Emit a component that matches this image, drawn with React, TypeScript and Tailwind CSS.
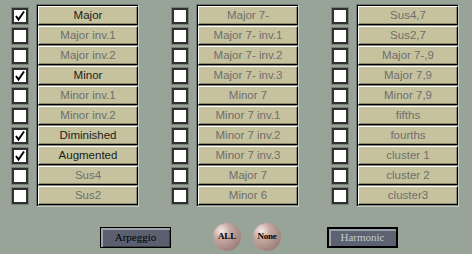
import React from "react";

type Chord = { label: string; on: boolean };

const columns: Chord[][] = [
  [
    { label: "Major", on: true },
    { label: "Major inv.1", on: false },
    { label: "Major inv.2", on: false },
    { label: "Minor", on: true },
    { label: "Minor inv.1", on: false },
    { label: "Minor inv.2", on: false },
    { label: "Diminished", on: true },
    { label: "Augmented", on: true },
    { label: "Sus4", on: false },
    { label: "Sus2", on: false },
  ],
  [
    { label: "Major 7-", on: false },
    { label: "Major 7- inv.1", on: false },
    { label: "Major 7- inv.2", on: false },
    { label: "Major 7- inv.3", on: false },
    { label: "Minor 7", on: false },
    { label: "Minor 7 inv.1", on: false },
    { label: "Minor 7 inv.2", on: false },
    { label: "Minor 7 inv.3", on: false },
    { label: "Major 7", on: false },
    { label: "Minor 6", on: false },
  ],
  [
    { label: "Sus4,7", on: false },
    { label: "Sus2,7", on: false },
    { label: "Major 7-,9", on: false },
    { label: "Major 7,9", on: false },
    { label: "Minor 7,9", on: false },
    { label: "fifths", on: false },
    { label: "fourths", on: false },
    { label: "cluster 1", on: false },
    { label: "cluster 2", on: false },
    { label: "cluster3", on: false },
  ],
];

function CheckBox({ checked }: { checked: boolean }) {
  return (
    <div className="w-[16px] h-[16px] bg-white border-2 border-[#303030] shadow-[0_0_0_1px_#788078] flex items-center justify-center">
      {checked && (
        <svg width="12" height="12" viewBox="0 0 12 12">
          <path d="M2 6 L4.5 9.5 L10 1.5" fill="none" stroke="#000" strokeWidth="2" />
        </svg>
      )}
    </div>
  );
}

function ChordColumn({ chords }: { chords: Chord[] }) {
  return (
    <div className="flex gap-[8px]">
      <div className="flex flex-col gap-[4px] pt-[4px]">
        {chords.map((c, i) => (
          <CheckBox key={i} checked={c.on} />
        ))}
      </div>
      <div className="border-l border-t border-[#6c746c] border-r border-b border-r-[#c4ccc4] border-b-[#c4ccc4]">
        <div className="flex flex-col gap-[1px] border-l border-t border-black bg-[#7e867e] pb-[1px]">
          {chords.map((c, i) => (
            <div
              key={i}
              className={`w-[100px] h-[19px] bg-[#c6c29e] border-t border-l border-white border-r border-b border-r-black border-b-black shadow-[inset_-1px_-1px_0_#8e8a70] flex items-center justify-center text-[11.5px] leading-none ${
                c.on ? "text-[#1c1c1c]" : "text-[#6e6e6e]"
              }`}
            >
              {c.label}
            </div>
          ))}
        </div>
      </div>
    </div>
  );
}

function RoundButton({ label }: { label: string }) {
  return (
    <div className="w-[28px] h-[28px] rounded-full bg-[radial-gradient(circle_at_30%_28%,#f4ecea_0%,#c8aaa4_30%,#a88a84_65%,#8a706c_100%)] flex items-center justify-center text-[9px] font-bold text-black [font-family:'Liberation_Serif',serif] tracking-tight">
      {label}
    </div>
  );
}

export default function App() {
  return (
    <div className="w-[472px] h-[254px] bg-[#98a498] [font-family:'Liberation_Sans',Arial,sans-serif] overflow-hidden">
      <div className="flex gap-[33px] pl-[12px] pt-[4px]">
        {columns.map((col, i) => (
          <ChordColumn key={i} chords={col} />
        ))}
      </div>
      <div className="flex items-center mt-[16px] h-[28px]">
        <div className="ml-[100px] w-[71px] h-[21px] border border-black bg-[#5a6070] shadow-[inset_2px_2px_0_#a0a4ac,inset_-1px_-1px_0_#3a3e48] flex items-center justify-center text-[11px] text-black [font-family:'Liberation_Serif',serif]">
          Arpeggio
        </div>
        <div className="ml-[42px]">
          <RoundButton label="ALL" />
        </div>
        <div className="ml-[12px]">
          <RoundButton label="None" />
        </div>
        <div className="ml-[46px] w-[71px] h-[21px] border-2 border-black bg-[#5c6272] shadow-[inset_2px_2px_0_#9ca0a8] flex items-center justify-center text-[11px] text-[#c4cccc] [font-family:'Liberation_Serif',serif]">
          Harmonic
        </div>
      </div>
    </div>
  );
}
